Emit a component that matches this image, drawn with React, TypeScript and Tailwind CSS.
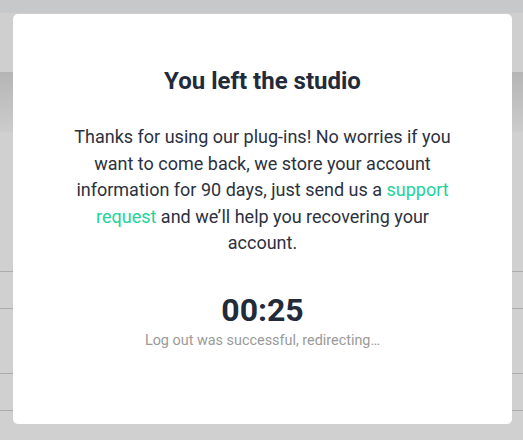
export default function App() {
  return (
    <div className="relative h-[440px] w-[523px] overflow-hidden bg-[#d0d0d0] font-['Roboto',sans-serif]">
      <div className="h-[13px] bg-[#c7c8c9]" />
      <div className="h-[59px] bg-[#cfcfcf]" />
      <div className="h-[60px] bg-gradient-to-b from-[#b5b5b5] to-[#cccccc]" />
      <div className="h-[139px]" />
      <div className="h-px bg-[#a9acaf]" />
      <div className="h-[36px]" />
      <div className="h-px bg-[#a9acaf]" />
      <div className="h-[64px]" />
      <div className="h-px bg-[#a9acaf]" />
      <div className="h-[36px]" />
      <div className="h-px bg-[#a9acaf]" />

      <div className="absolute left-[13px] top-[14px] flex h-[410px] w-[499px] flex-col items-center rounded-[5px] bg-white px-[60px] pt-[51px] text-center">
        <h2 className="text-[24px] font-bold leading-[32px] text-[#232a3a]">
          You left the studio
        </h2>
        <p className="mt-[27px] text-[18px] leading-[26.5px] text-[#2b3140]">
          Thanks for using our plug-ins! No worries if you want to come back,
          we store your account information for 90 days, just send us a{" "}
          <a className="text-[#1fd39b]">support request</a> and we’ll help you
          recovering your account.
        </p>
        <div className="mt-[33px] text-[32px] font-bold leading-[40px] text-[#232a3a]">
          00:25
        </div>
        <div className="mt-[1px] text-[14.4px] leading-[20px] text-[#9a9a9a]">
          Log out was successful, redirecting…
        </div>
      </div>
    </div>
  );
}
